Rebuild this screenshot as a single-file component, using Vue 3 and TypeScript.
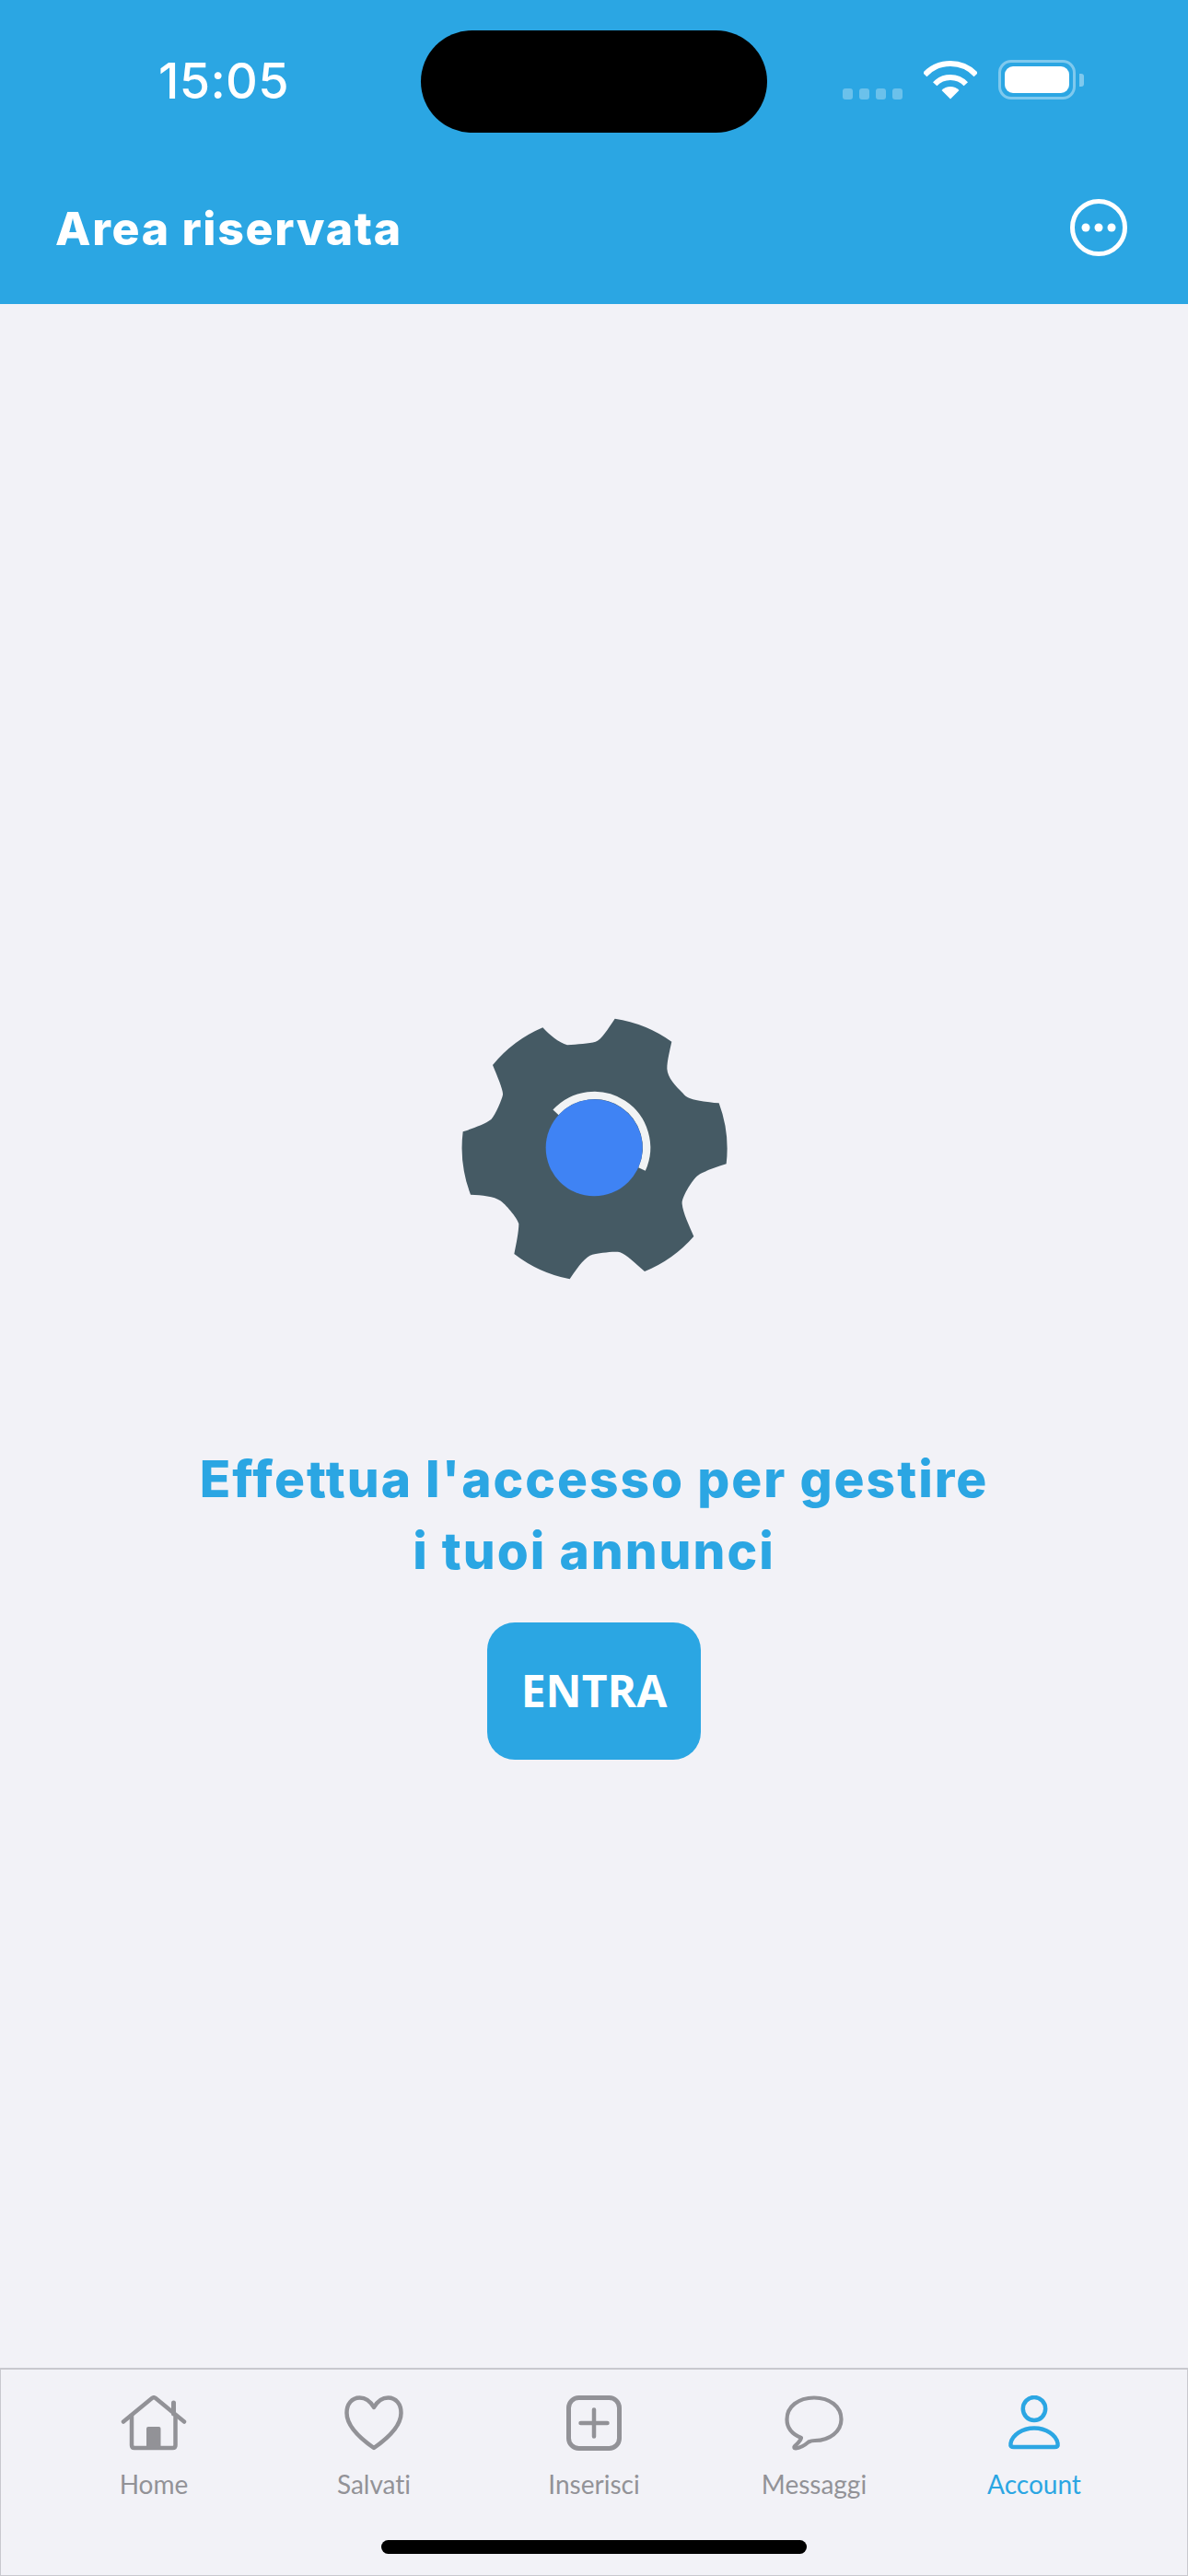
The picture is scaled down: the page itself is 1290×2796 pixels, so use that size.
<template>
  <div class="screen">
    <header class="top">
      <div class="status">
        <span class="time">15:05</span>
        <div class="island"></div>
        <div class="status-icons">
          <div class="signal"><i v-for="n in 4" :key="n"></i></div>
          <svg class="wifi" width="58" height="43" viewBox="0 0 58 43">
            <path d="M1.2 16.1A38 38 0 0 1 56.8 16.1" fill="none" stroke="#fff" stroke-width="6" />
            <path d="M12.2 26.3A23 23 0 0 1 45.8 26.3" fill="none" stroke="#fff" stroke-width="6" />
            <path d="M29 42.5L19.5 33.1A13 13 0 0 1 38.5 33.1Z" fill="#fff" />
          </svg>
          <div class="battery"><div class="battery-fill"></div></div>
          <div class="battery-nub"></div>
        </div>
      </div>
      <div class="nav">
        <h1>Area riservata</h1>
        <svg width="62" height="62" viewBox="0 0 62 62">
          <circle cx="31" cy="31" r="28.5" fill="none" stroke="#fff" stroke-width="5" />
          <circle cx="17" cy="31" r="4.5" fill="#fff" />
          <circle cx="31" cy="31" r="4.5" fill="#fff" />
          <circle cx="45" cy="31" r="4.5" fill="#fff" />
        </svg>
      </div>
    </header>

    <main class="content">
      <svg class="gear" width="330" height="330" viewBox="0 0 990 990">
        <path
          fill="#455a64"
          d="M563 77A426 426 0 0 1 748 152C742 180 733 215 733 240C735 270 760 295 785 320C800 340 830 345 902 352A426 426 0 0 1 926 550C880 565 850 575 830 590C810 610 780 660 782 680C785 710 805 750 820 786A426 426 0 0 1 660 900C630 875 600 845 580 838C560 833 510 842 490 845C470 850 445 880 416 925A426 426 0 0 1 235 843C242 810 250 770 250 745C245 725 205 680 190 670C170 655 130 652 93 650A426 426 0 0 1 68 445C100 435 140 420 160 405C175 390 195 340 198 325C200 310 180 265 165 228A426 426 0 0 1 328 106C350 130 380 155 408 163C440 160 480 158 500 152C520 145 540 110 563 77Z"
        />
        <path d="M370.500 382.200A170 170 0 0 1 651 566.900" fill="none" stroke="#f1f3f4" stroke-width="25" />
        <circle cx="495.500" cy="497.500" r="157.500" fill="#3f83f4" />
      </svg>
      <p class="message">Effettua l'accesso per gestire<br />i tuoi annunci</p>
      <button class="enter" type="button">ENTRA</button>
    </main>

    <nav class="tabs">
      <div v-for="tab in tabs" :key="tab.label" class="tab" :class="{ active: tab.active }">
        <svg v-if="tab.icon === 'home'" width="72" height="60" viewBox="0 0 72 60" class="tab-icon">
          <path d="M3 28.5L34 3Q36 1.500 38 3L69 28.5" fill="none" stroke="currentColor" stroke-width="4.500" stroke-linecap="round" />
          <path d="M57.500 8V20" fill="none" stroke="currentColor" stroke-width="5" stroke-linecap="round" />
          <path d="M12 20V54Q12 57 15 57H56.500Q59.500 57 59.500 54V20" fill="none" stroke="currentColor" stroke-width="4.500" />
          <rect x="28" y="34" width="15.500" height="23" rx="2" fill="currentColor" />
        </svg>
        <svg v-else-if="tab.icon === 'heart'" width="64" height="60" viewBox="0 0 64 60" class="tab-icon">
          <path d="M32 13C28 6 22 2.500 16.500 2.500C8 2.500 2.500 9.500 2.500 19C2.500 34 19 48 32 57C45 48 61.500 34 61.500 19C61.500 9.500 56 2.500 47.500 2.500C42 2.500 36 6 32 13Z" fill="none" stroke="currentColor" stroke-width="4.500" stroke-linejoin="round" />
        </svg>
        <svg v-else-if="tab.icon === 'plus'" width="60" height="60" viewBox="0 0 60 60" class="tab-icon">
          <rect x="2.500" y="2.500" width="55" height="55" rx="11" fill="none" stroke="currentColor" stroke-width="5" />
          <path d="M15.500 30H44.500M30 15.500V44.500" fill="none" stroke="currentColor" stroke-width="4.500" stroke-linecap="round" />
        </svg>
        <svg v-else-if="tab.icon === 'chat'" width="64" height="60" viewBox="0 0 64 60" class="tab-icon">
          <path d="M18 46C8 42 2.500 35 2.500 26C2.500 12 15 2.500 32 2.500C49 2.500 61.500 12 61.500 26C61.500 39 49 49 33 49C30 49 28 49.500 26 50.500C22 54 17 57 12 57.500C10 57.500 10 56 11 55C14 52 17 50 18 46Z" fill="none" stroke="currentColor" stroke-width="4.200" stroke-linejoin="round" />
        </svg>
        <svg v-else width="60" height="60" viewBox="0 0 60 60" class="tab-icon">
          <ellipse cx="30" cy="14.500" rx="12.200" ry="12.500" fill="none" stroke="currentColor" stroke-width="4.500" />
          <path d="M4.500 52C6 43 17 35.500 30 35.500C43 35.500 54 43 55.500 52C56 55 55 56 52 56H8C5 56 4 55 4.500 52Z" fill="none" stroke="currentColor" stroke-width="4.500" stroke-linejoin="round" />
        </svg>
        <span>{{ tab.label }}</span>
      </div>
      <div class="home-bar"></div>
    </nav>
  </div>
</template>

<script setup lang="ts">
interface Tab {
  label: string
  icon: string
  active?: boolean
}

const tabs: Tab[] = [
  { label: 'Home', icon: 'home' },
  { label: 'Salvati', icon: 'heart' },
  { label: 'Inserisci', icon: 'plus' },
  { label: 'Messaggi', icon: 'chat' },
  { label: 'Account', icon: 'user', active: true }
]
</script>

<style scoped>
.screen {
  width: 1290px;
  height: 2796px;
  display: flex;
  flex-direction: column;
  background: #f2f2f7;
  font-family: Inter, sans-serif;
  overflow: hidden;
}

.top {
  height: 330px;
  flex: none;
  background: #2ba6e3;
  color: #fff;
}

.status {
  position: relative;
  height: 164px;
  display: flex;
  justify-content: space-between;
  align-items: flex-start;
  padding: 55px 0 0 172px;
  box-sizing: border-box;
}

.time {
  font-size: 54px;
  line-height: 66px;
  font-weight: 500;
  letter-spacing: 0.3px;
}

.island {
  position: absolute;
  left: 457px;
  top: 33px;
  width: 376px;
  height: 111px;
  border-radius: 56px;
  background: #000;
}

.status-icons {
  display: flex;
  align-items: flex-start;
  padding: 10px 113px 0 0;
}

.signal {
  display: flex;
  gap: 7px;
  margin: 31px 23px 0 0;
}

.signal i {
  width: 11px;
  height: 12px;
  border-radius: 3px;
  background: rgba(255, 255, 255, 0.3);
}

.wifi {
  margin-right: 23px;
}

.battery {
  width: 84px;
  height: 43px;
  box-sizing: border-box;
  padding: 4px;
  border: 3px solid rgba(255, 255, 255, 0.4);
  border-radius: 14px;
}

.battery-fill {
  height: 100%;
  border-radius: 9px;
  background: #fff;
}

.battery-nub {
  width: 5px;
  height: 14px;
  margin: 15px 0 0 4px;
  border-radius: 0 3px 3px 0;
  background: rgba(255, 255, 255, 0.4);
}

.nav {
  display: flex;
  justify-content: space-between;
  align-items: center;
  height: 166px;
  padding: 0 66px 0 60px;
  box-sizing: border-box;
}

.nav h1 {
  margin: 2px 0 0;
  font-size: 50px;
  line-height: 60px;
  font-weight: 800;
  letter-spacing: 1.7px;
}

.content {
  flex: 1;
  display: flex;
  flex-direction: column;
  align-items: center;
  padding-top: 750px;
}

.gear {
  display: block;
}

.message {
  margin: 156px 0 0;
  font-size: 55px;
  line-height: 78px;
  font-weight: 800;
  letter-spacing: 2px;
  text-align: center;
  color: #2ba6e3;
}

.enter {
  width: 232px;
  height: 149px;
  margin-top: 39px;
  padding: 0 0 2px;
  border: none;
  border-radius: 30px;
  background: #2ba6e3;
  color: #fff;
  font-family: "Open Sans", sans-serif;
  font-size: 48px;
  font-weight: 700;
}

.tabs {
  position: relative;
  height: 226px;
  flex: none;
  box-sizing: border-box;
  display: grid;
  grid-template-columns: repeat(5, 239px);
  justify-content: center;
  align-items: start;
  padding-top: 28px;
  border: 1px solid #c8c8ce;
  border-top-width: 2px;
}

.tab {
  display: flex;
  flex-direction: column;
  align-items: center;
  color: #929297;
  font-family: Lato, sans-serif;
  font-size: 28px;
  line-height: 34px;
  font-variant-ligatures: none;
}

.tab.active {
  color: #2ba6e3;
}

.tab-icon {
  display: block;
  margin-bottom: 19px;
}

.home-bar {
  position: absolute;
  left: 413px;
  bottom: 23px;
  width: 462px;
  height: 15px;
  border-radius: 8px;
  background: #000;
}
</style>
